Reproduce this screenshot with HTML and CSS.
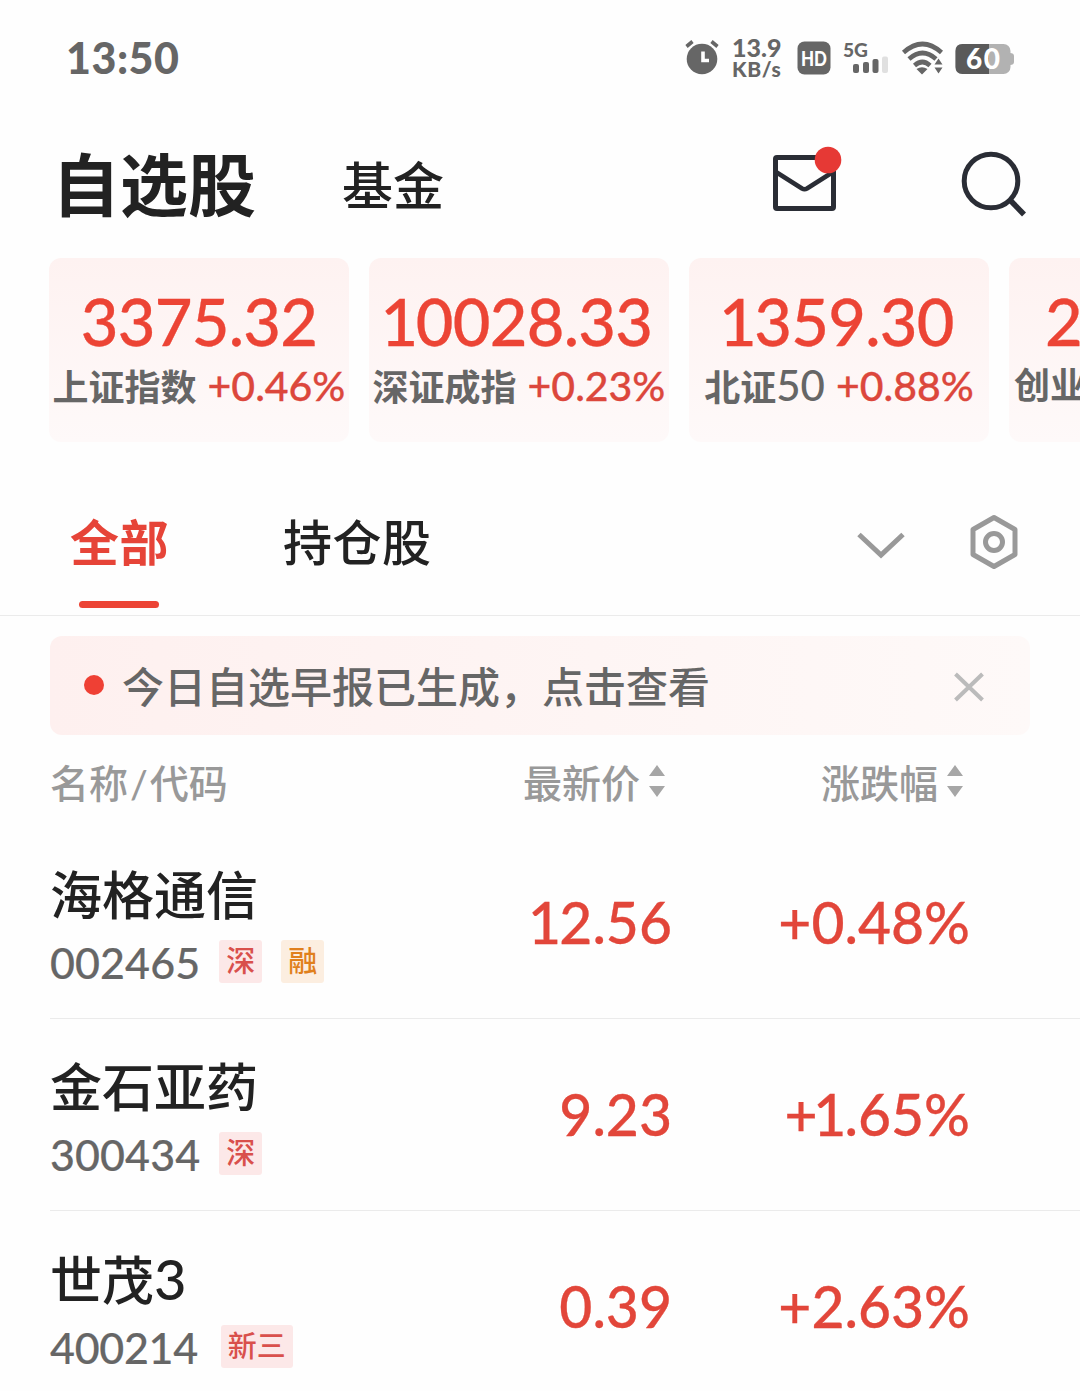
FILE: index.html
```html
<!DOCTYPE html>
<html lang="zh-CN">
<head>
  <meta charset="UTF-8">
  <meta name="viewport" content="width=device-width, initial-scale=1.0">
  <title>自选股</title>
  <link rel="stylesheet" href="styles.css">
</head>
<body>
  <div class="status-bar">
    <span class="clock">13:50</span>
    <div class="status-icons">
      <svg class="alarm" width="34" height="36" viewBox="0 0 34 36">
        <circle cx="17" cy="19" r="15.3" fill="#666"/>
        <path d="M1.500 6.500 L7.500 1.500 M32.500 6.500 L26.500 1.500" stroke="#666" stroke-width="3.600" fill="none"/>
        <path d="M18 11.500 V20.500 H24" stroke="#fff" stroke-width="3.600" fill="none"/>
      </svg>
      <div class="speed"><span>13.9</span><span class="unit">KB/s</span></div>
      <svg class="hd" width="34" height="34" viewBox="0 0 34 34">
        <rect x="0.500" y="0.500" width="33" height="33" rx="7" fill="#666"/>
        <text x="4" y="24.500" class="hd-text" textLength="26" lengthAdjust="spacingAndGlyphs">HD</text>
      </svg>
      <svg class="signal" width="46" height="34" viewBox="0 0 46 34">
        <text x="0" y="14.500" class="signal-text" textLength="25" lengthAdjust="spacingAndGlyphs">5G</text>
        <rect x="10" y="22" width="6" height="9" rx="2" fill="#666"/>
        <rect x="20" y="20" width="6" height="11" rx="2" fill="#666"/>
        <rect x="29.500" y="17" width="6" height="14" rx="2" fill="#666"/>
        <rect x="39" y="14.500" width="6" height="16.500" rx="2" fill="#e0e0e0"/>
      </svg>
      <svg class="wifi" width="42" height="34" viewBox="0 0 42 34">
        <g fill="none" stroke="#666" stroke-width="4.600">
          <path d="M1.500 11.500 Q20.500 -5.500 39.500 11.500"/>
          <path d="M7 18 Q20.500 6 34 18"/>
          <path d="M12.500 24.500 Q20.500 17.500 28 24.500"/>
        </g>
        <path d="M14.500 28 Q20 24.500 25.500 28 L20 33.500 Z M32.500 23.500 L36.500 17.500 L40.500 23.500 Z M32.500 26.500 H40.500 L36.500 32.500 Z" fill="#666"/>
      </svg>
      <svg class="battery" width="60" height="32" viewBox="0 0 60 32">
        <rect x="0.500" y="1" width="55" height="30" rx="7" fill="#b2b2b2"/>
        <path d="M7.500 1 H34 V31 H7.500 Q0.500 31 0.500 24 V8 Q0.500 1 7.500 1 Z" fill="#5a5a5a"/>
        <path d="M55 10 Q59 10 59 13 V19 Q59 22 55 22 Z" fill="#b2b2b2"/>
        <text x="11" y="26" class="battery-text" textLength="34">60</text>
      </svg>
    </div>
  </div>

  <div class="header">
    <h1>自选股</h1>
    <span class="fund">基金</span>
    <svg class="mail" width="72" height="68" viewBox="0 0 72 68">
      <rect x="4.500" y="11.500" width="58" height="51" rx="1.500" fill="none" stroke="#2a2d35" stroke-width="5"/>
      <path d="M5 26 L31 42.500 Q33.500 44 36 42.500 L62 26" fill="none" stroke="#2a2d35" stroke-width="4.500"/>
      <circle cx="57" cy="14" r="13.300" fill="#e63935"/>
    </svg>
    <svg class="search" width="68" height="68" viewBox="0 0 68 68">
      <circle cx="31" cy="31" r="26.800" fill="none" stroke="#2a2d35" stroke-width="5"/>
      <path d="M49.500 49.500 L64 64.500" stroke="#2a2d35" stroke-width="5.500"/>
    </svg>
  </div>

  <div class="indices">
    <div class="index-card">
      <div class="index-value">3375.32</div>
      <div class="index-info"><span class="index-name">上证指数</span><span class="index-pct">+0.46%</span></div>
    </div>
    <div class="index-card">
      <div class="index-value"><span class="one">1</span>0028.33</div>
      <div class="index-info"><span class="index-name">深证成指</span><span class="index-pct">+0.23%</span></div>
    </div>
    <div class="index-card">
      <div class="index-value"><span class="one">1</span>359.30</div>
      <div class="index-info"><span class="index-name">北证<span class="num">50</span></span><span class="index-pct">+0.88%</span></div>
    </div>
    <div class="index-card cut">
      <div class="index-value">2</div>
      <div class="index-info"><span class="index-name">创业</span></div>
    </div>
  </div>

  <div class="tabs">
    <span class="tab active">全部</span>
    <span class="tab">持仓股</span>
    <svg class="arrow" width="48" height="28" viewBox="0 0 48 28">
      <path d="M2 2.500 L24 23 L46 2.500" fill="none" stroke="#999" stroke-width="5"/>
    </svg>
    <svg class="setting" width="50" height="56" viewBox="0 0 50 56">
      <path d="M25 3.500 L46 15.500 V40.500 L25 52.500 L4 40.500 V15.500 Z" fill="none" stroke="#999" stroke-width="5" stroke-linejoin="round"/>
      <circle cx="25" cy="28" r="8.500" fill="none" stroke="#999" stroke-width="5"/>
    </svg>
  </div>

  <div class="notice">
    <span class="dot"></span>
    <span class="notice-text">今日自选早报已生成，点击查看</span>
    <svg class="close" width="30" height="30" viewBox="0 0 30 30">
      <path d="M1.500 2 L28.500 28 M28.500 2 L1.500 28" stroke="#bbb" stroke-width="4"/>
    </svg>
  </div>

  <div class="list-head">
    <span>名称<span class="slash">/</span>代码</span>
    <span class="sortable">最新价
      <svg width="16" height="32" viewBox="0 0 16 32"><path d="M0 11 L8 0 L16 11 Z M0 21 H16 L8 32 Z" fill="#a6a6a6"/></svg>
    </span>
    <span class="sortable">涨跌幅
      <svg width="16" height="32" viewBox="0 0 16 32"><path d="M0 11 L8 0 L16 11 Z M0 21 H16 L8 32 Z" fill="#a6a6a6"/></svg>
    </span>
  </div>

  <div class="stock">
    <div class="stock-info">
      <div class="name">海格通信</div>
      <div class="code">002465<span class="tag">深</span><span class="tag orange">融</span></div>
    </div>
    <div class="price"><span class="one">1</span>2.56</div>
    <div class="change">+0.48%</div>
  </div>
  <div class="stock">
    <div class="stock-info">
      <div class="name">金石亚药</div>
      <div class="code">300434<span class="tag">深</span></div>
    </div>
    <div class="price">9.23</div>
    <div class="change">+<span class="one">1</span>.65%</div>
  </div>
  <div class="stock">
    <div class="stock-info">
      <div class="name">世茂<span class="num">3</span></div>
      <div class="code narrow">400214<span class="tag">新三</span></div>
    </div>
    <div class="price">0.39</div>
    <div class="change">+2.63%</div>
  </div>
</body>
</html>
```
FILE: styles.css
```css
* {
  box-sizing: border-box;
}

body {
  margin: 0;
  height: 1391px;
  overflow: hidden;
  background: #fefefe;
  color: #222;
  font-family: Lato, "Noto Sans CJK SC", sans-serif;
  font-weight: 500;
}

svg {
  display: block;
  flex: none;
  overflow: visible;
}

/* narrow figure one */
.one {
  margin: 0 -0.03em 0 -0.08em;
}

/* status bar */
.status-bar {
  display: flex;
  justify-content: space-between;
  height: 116px;
  padding: 0 65px 0 66px;
  color: #666;
}

.clock {
  line-height: 115px;
  font-size: 43px;
  font-weight: 900;
  letter-spacing: 0.5px;
}

.status-icons {
  display: flex;
  align-items: center;
  height: 116px;
}

.speed {
  display: flex;
  flex-direction: column;
  width: 50px;
  margin: 0 15px 0 13px;
  font-size: 25px;
  font-weight: 900;
  line-height: 22px;
  white-space: nowrap;
}

.speed .unit {
  font-size: 21px;
  letter-spacing: 0.6px;
}

.signal {
  margin-left: 12px;
  margin-top: 2px;
}

.wifi {
  margin-left: 13px;
}

.battery {
  margin-left: 11px;
  margin-top: 2px;
}

.hd-text {
  font-size: 21px;
  font-weight: 900;
  fill: #fff;
}

.signal-text {
  font-size: 19px;
  font-weight: 900;
  fill: #666;
}

.battery-text {
  font-size: 28px;
  font-weight: 900;
  fill: #fff;
}

/* title */
.header {
  display: flex;
  align-items: center;
  height: 142px;
  padding: 0 52px 8px 52px;
}

h1 {
  width: 290px;
  margin: 4px 0 0;
  font-size: 68px;
  font-weight: 700;
  line-height: 80px;
}

.fund {
  margin-top: 6px;
  font-size: 51px;
  line-height: 80px;
}

.mail {
  margin: -6px 0 0 auto;
}

.search {
  margin-left: 117px;
  margin-top: 1px;
}

/* index cards */
.indices {
  display: flex;
  gap: 20px;
  height: 184px;
  padding-left: 49px;
  overflow: hidden;
}

.index-card {
  flex: none;
  width: 300px;
  padding-top: 29px;
  border-radius: 12px;
  background: linear-gradient(#fef2f1, #fef9f9);
  text-align: center;
}

.index-value {
  height: 68px;
  line-height: 68px;
  font-size: 65px;
  letter-spacing: -0.7px;
  color: #ec4435;
  -webkit-text-stroke: 0.3px #ec4435;
}

.index-info {
  display: flex;
  justify-content: center;
  align-items: baseline;
  height: 60px;
  line-height: 61px;
  white-space: nowrap;
}

.index-name {
  font-size: 36px;
  font-weight: 700;
  color: #666;
}

.index-name .num {
  font-size: 42px;
  font-weight: 500;
}

.index-pct {
  margin-left: 11px;
  font-size: 41px;
  color: #dc473c;
  -webkit-text-stroke: 0.3px #dc473c;
}

.cut {
  text-align: left;
}

.cut .index-value {
  padding-left: 36px;
}

.cut .index-info {
  justify-content: flex-start;
  padding-left: 5px;
}

/* group tabs */
.tabs {
  display: flex;
  align-items: center;
  height: 174px;
  padding: 26px 61px 0 70px;
  border-bottom: 1px solid #ebebeb;
}

.tab {
  position: relative;
  margin-right: 115px;
  font-size: 49px;
  line-height: 80px;
  letter-spacing: 0.5px;
}

.tab.active {
  margin-right: 114px;
  font-weight: 700;
  color: #e64438;
}

.tab.active::after {
  content: '';
  position: absolute;
  left: 9px;
  bottom: -26px;
  width: 80px;
  height: 7px;
  border-radius: 4px;
  background: #ec4435;
}

.arrow {
  margin-left: auto;
  margin-top: 8px;
}

.setting {
  margin-left: 64px;
}

/* morning report */
.notice {
  display: flex;
  align-items: center;
  height: 99px;
  margin: 20px 50px 0;
  padding: 0 46px 0 34px;
  border-radius: 12px;
  background: linear-gradient(90deg, #fef0ef, #fef9f8);
}

.dot {
  width: 20px;
  height: 20px;
  margin-right: 18px;
  margin-top: -1px;
  border-radius: 50%;
  background: #ef4034;
}

.notice-text {
  margin-top: -2px;
  font-size: 42px;
  color: #666;
}

.close {
  margin-left: auto;
  margin-top: 2px;
}

/* stock list */
.list-head,
.stock {
  display: grid;
  grid-template-columns: 400px 222px 298px;
  margin-left: 50px;
}

.list-head {
  height: 92px;
  font-size: 39px;
  line-height: 96px;
  color: #999;
}

.slash {
  margin: 0 2px;
}

.sortable {
  display: flex;
  align-items: center;
  justify-content: flex-end;
  gap: 9px;
  padding-right: 7px;
}

.sortable svg {
  margin-top: -4px;
}

.stock {
  height: 192px;
  border-bottom: 1px solid #ebebeb;
}

.stock:last-child {
  border-bottom: none;
}

.name {
  padding-top: 33px;
  font-size: 52px;
  line-height: 70px;
}

.name .num {
  font-size: 56px;
}

.code {
  display: flex;
  align-items: center;
  height: 65px;
  font-size: 43px;
  letter-spacing: 0.1px;
  color: #666;
  -webkit-text-stroke: 0.2px #666;
}

.code.narrow {
  letter-spacing: -0.3px;
}

.code.narrow .tag {
  margin-left: 23px;
}

.tag {
  height: 43px;
  margin: -2px 0 0 19px;
  padding: 0 7px;
  border-radius: 3px;
  background: #fce8e8;
  font-size: 29px;
  line-height: 41px;
  letter-spacing: 0;
  color: #d9504c;
  -webkit-text-stroke: 0;
}

.tag.orange {
  background: #fceee0;
  color: #e0801c;
}

.price,
.change {
  font-size: 57px;
  line-height: 190px;
  text-align: right;
  color: #e2463a;
  -webkit-text-stroke: 0.3px #e2463a;
}
```
